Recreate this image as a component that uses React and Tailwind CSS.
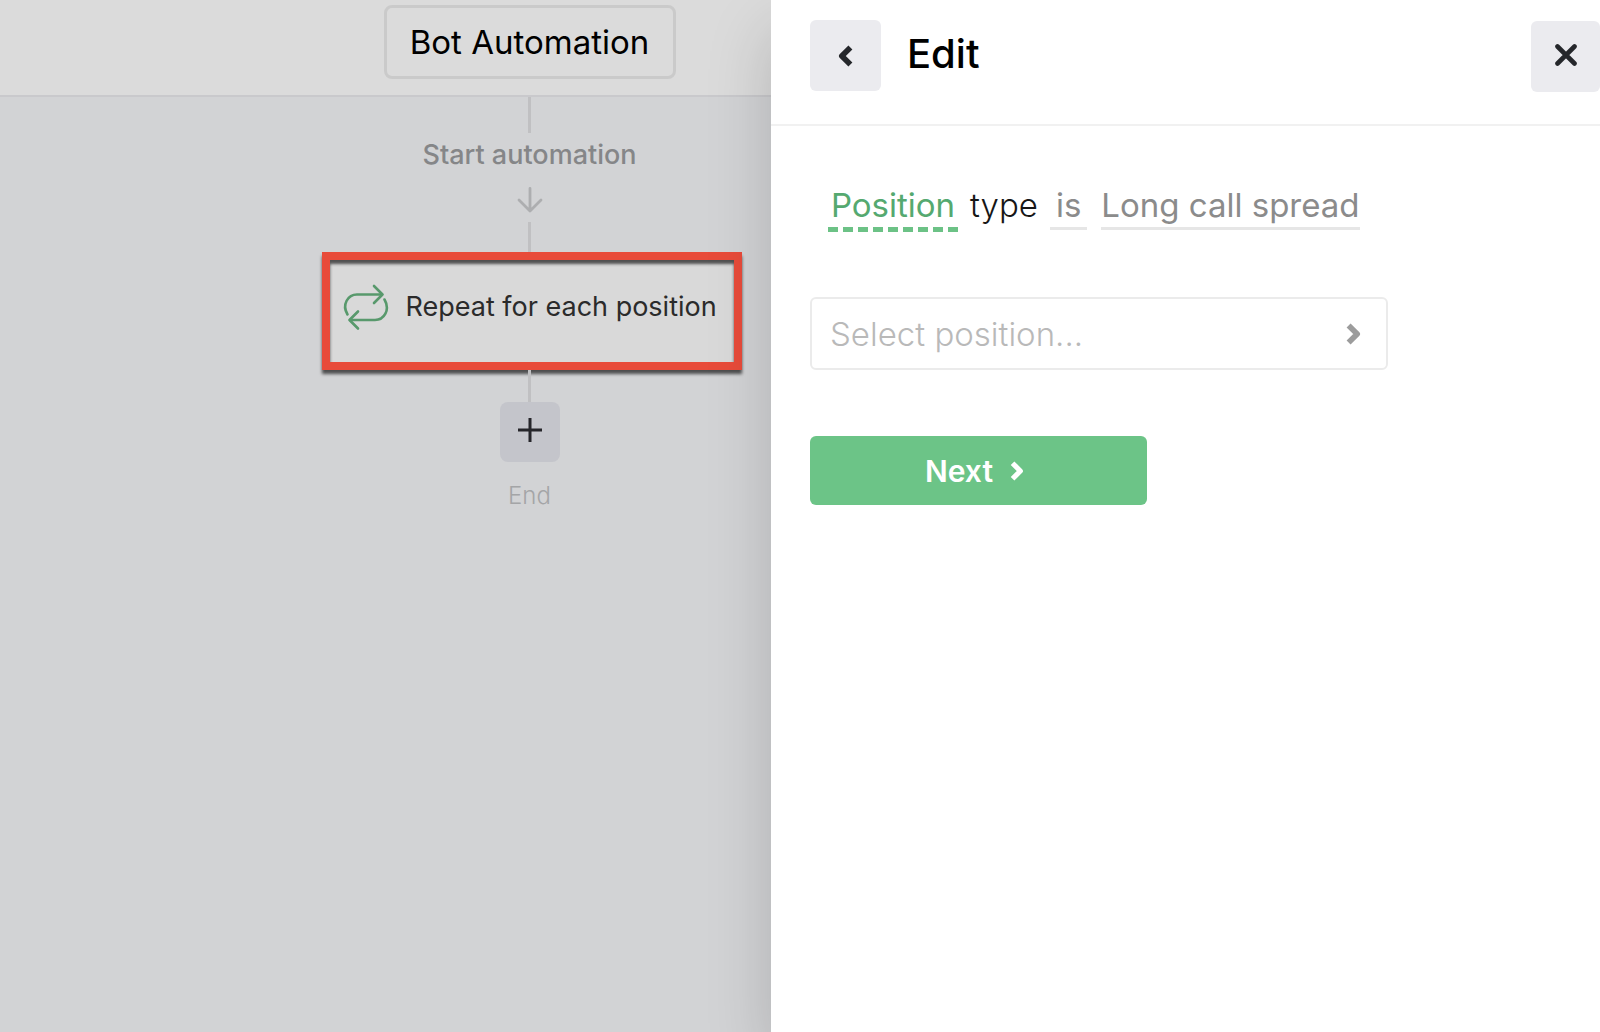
import React from "react";

function RepeatIcon() {
  return (
    <svg
      aria-hidden="true"
      className="h-12 w-12 shrink-0 text-[#58996c]"
      viewBox="0 0 48 48"
      fill="none"
      stroke="currentColor"
      strokeWidth="2.6"
      strokeLinecap="round"
      strokeLinejoin="round"
    >
      <path d="M6.500 31.500C0.500 21.500 7 11.500 16 11.500H41" />
      <path d="M33 3L41.500 11.500L33 20" />
      <path d="M43.500 16.500C49.500 27 43 37 34 37H9" />
      <path d="M17 28.500L8.500 37L17 45.500" />
    </svg>
  );
}

function ArrowDown() {
  return (
    <svg
      aria-hidden="true"
      className="h-[26px] w-[26px] text-[#adaeb0]"
      viewBox="0 0 26 26"
      fill="none"
      stroke="currentColor"
      strokeWidth="2.8"
      strokeLinecap="round"
      strokeLinejoin="round"
    >
      <path d="M13 1.500V24M2 13L13 24L24 13" />
    </svg>
  );
}

function Plus() {
  return (
    <svg
      aria-hidden="true"
      className="h-6 w-6"
      viewBox="0 0 24 24"
      fill="none"
      stroke="currentColor"
      strokeWidth="3"
    >
      <path d="M12 0V24M0 12H24" />
    </svg>
  );
}

function Chevron({ className }) {
  return (
    <svg
      aria-hidden="true"
      className={className}
      viewBox="0 0 15 22"
      fill="none"
      stroke="currentColor"
      strokeWidth="5.6"
      strokeLinejoin="round"
    >
      <path d="M2.600 2.400L11.200 11L2.600 19.600" />
    </svg>
  );
}

function Close() {
  return (
    <svg
      aria-hidden="true"
      className="h-[22px] w-[22px]"
      viewBox="0 0 22 22"
      fill="none"
      stroke="currentColor"
      strokeWidth="4.6"
      strokeLinecap="round"
    >
      <path d="M2.500 2.500L19.500 19.500M19.500 2.500L2.500 19.500" />
    </svg>
  );
}

function Canvas() {
  return (
    <main className="flex min-w-0 flex-col bg-[#d2d3d5]">
      <header className="flex h-[97px] justify-center border-b-2 border-[#c9c9cc] bg-[#dbdbdb] pt-[5px] pl-[288px]">
        <button
          type="button"
          className="h-[74px] w-[292px] rounded-lg border-[3px] border-[#cacaca] text-[33px] leading-10 whitespace-nowrap text-black"
        >
          Bot Automation
        </button>
      </header>
      <div className="flex flex-col items-center pl-[288px]">
        <div className="h-9 w-[3px] bg-[#c0c0c2]" />
        <p className="mt-1 text-[27px] leading-9 font-medium whitespace-nowrap text-[#858688]">
          Start automation
        </p>
        <div className="mt-[14px]">
          <ArrowDown />
        </div>
        <div className="mt-[9px] h-[30px] w-[3px] bg-[#c0c0c2]" />
        <button
          type="button"
          className="-mr-1 flex h-[118px] w-[420px] shrink-0 gap-[17px] border-8 border-[#e84b3a] bg-[#d9d9d9] pt-[23px] pl-[11px] text-left text-[27px] leading-10 whitespace-nowrap text-[#2b2b2b] shadow-[0_4px_3px_#000000a0,inset_0_4px_3px_#000000a0]"
        >
          <RepeatIcon />
          <span className="pt-1">Repeat for each position</span>
        </button>
        <div className="h-8 w-[3px] bg-[#c0c0c2]" />
        <button
          type="button"
          aria-label="Add step"
          className="flex h-[60px] w-[60px] items-center justify-center rounded-lg bg-[#c4c5cb] pb-1 text-[#25252a]"
        >
          <Plus />
        </button>
        <p className="mt-4 text-2xl leading-9 font-light text-[#a4a5a7]">End</p>
      </div>
    </main>
  );
}

function Drawer() {
  return (
    <aside className="min-w-0 bg-white shadow-[0_30px_60px_#0000002c]">
      <header className="flex h-[126px] items-start justify-between border-b-2 border-[#f1f1f1] pt-5 pl-[39px]">
        <div className="flex items-center gap-[26px]">
          <button
            type="button"
            aria-label="Back"
            className="flex h-[71px] w-[71px] items-center justify-center rounded-md bg-[#ebebef] text-[#25272b]"
          >
            <Chevron className="h-[22px] w-[15px] rotate-180" />
          </button>
          <h1 className="pb-1 text-[40px] leading-[48px] font-medium text-black">Edit</h1>
        </div>
        <button
          type="button"
          aria-label="Close"
          className="mt-px flex h-[71px] w-[69px] items-center justify-center rounded-md bg-[#ebebef] pb-1 text-[#25272b]"
        >
          <Close />
        </button>
      </header>
      <div className="pt-[57px] pl-[39px]">
        <div className="flex items-start pl-[18px] text-[33px] leading-[44px] whitespace-nowrap">
          <button type="button" className="w-[130px] text-[#55a970]">
            Position
            <span className="block h-[5px] bg-[repeating-linear-gradient(90deg,#6cc286_0_10px,transparent_10px_15px)]" />
          </button>
          <span className="ml-3 font-light text-[#161616]">type</span>
          <button type="button" className="ml-3 border-b-[3px] border-[#e6e6e6] px-[6px] text-[#8b8b8b]">
            is
          </button>
          <button type="button" className="ml-[14px] border-b-[3px] border-[#e6e6e6] text-[#8b8b8b]">
            Long call spread
          </button>
        </div>
        <button
          type="button"
          className="mt-[65px] flex h-[73px] w-[578px] max-w-full items-center justify-between rounded-md border-2 border-[#ebebeb] pr-[25px] pl-[18px] text-[33px] leading-10 font-light text-[#b9b9b9]"
        >
          Select position...
          <Chevron className="h-[22px] w-[15px] text-[#9c9c9c]" />
        </button>
        <button
          type="button"
          className="mt-[66px] flex h-[69px] w-[337px] max-w-full items-center justify-center gap-[17px] rounded-md bg-[#6cc487] pr-2 text-[30px] leading-9 font-semibold text-white"
        >
          Next
          <Chevron className="h-5 w-[14px]" />
        </button>
      </div>
    </aside>
  );
}

export default function App() {
  return (
    <div className="grid min-h-screen grid-cols-[771fr_829fr] overflow-x-hidden font-['Inter',sans-serif]">
      <Canvas />
      <Drawer />
    </div>
  );
}
